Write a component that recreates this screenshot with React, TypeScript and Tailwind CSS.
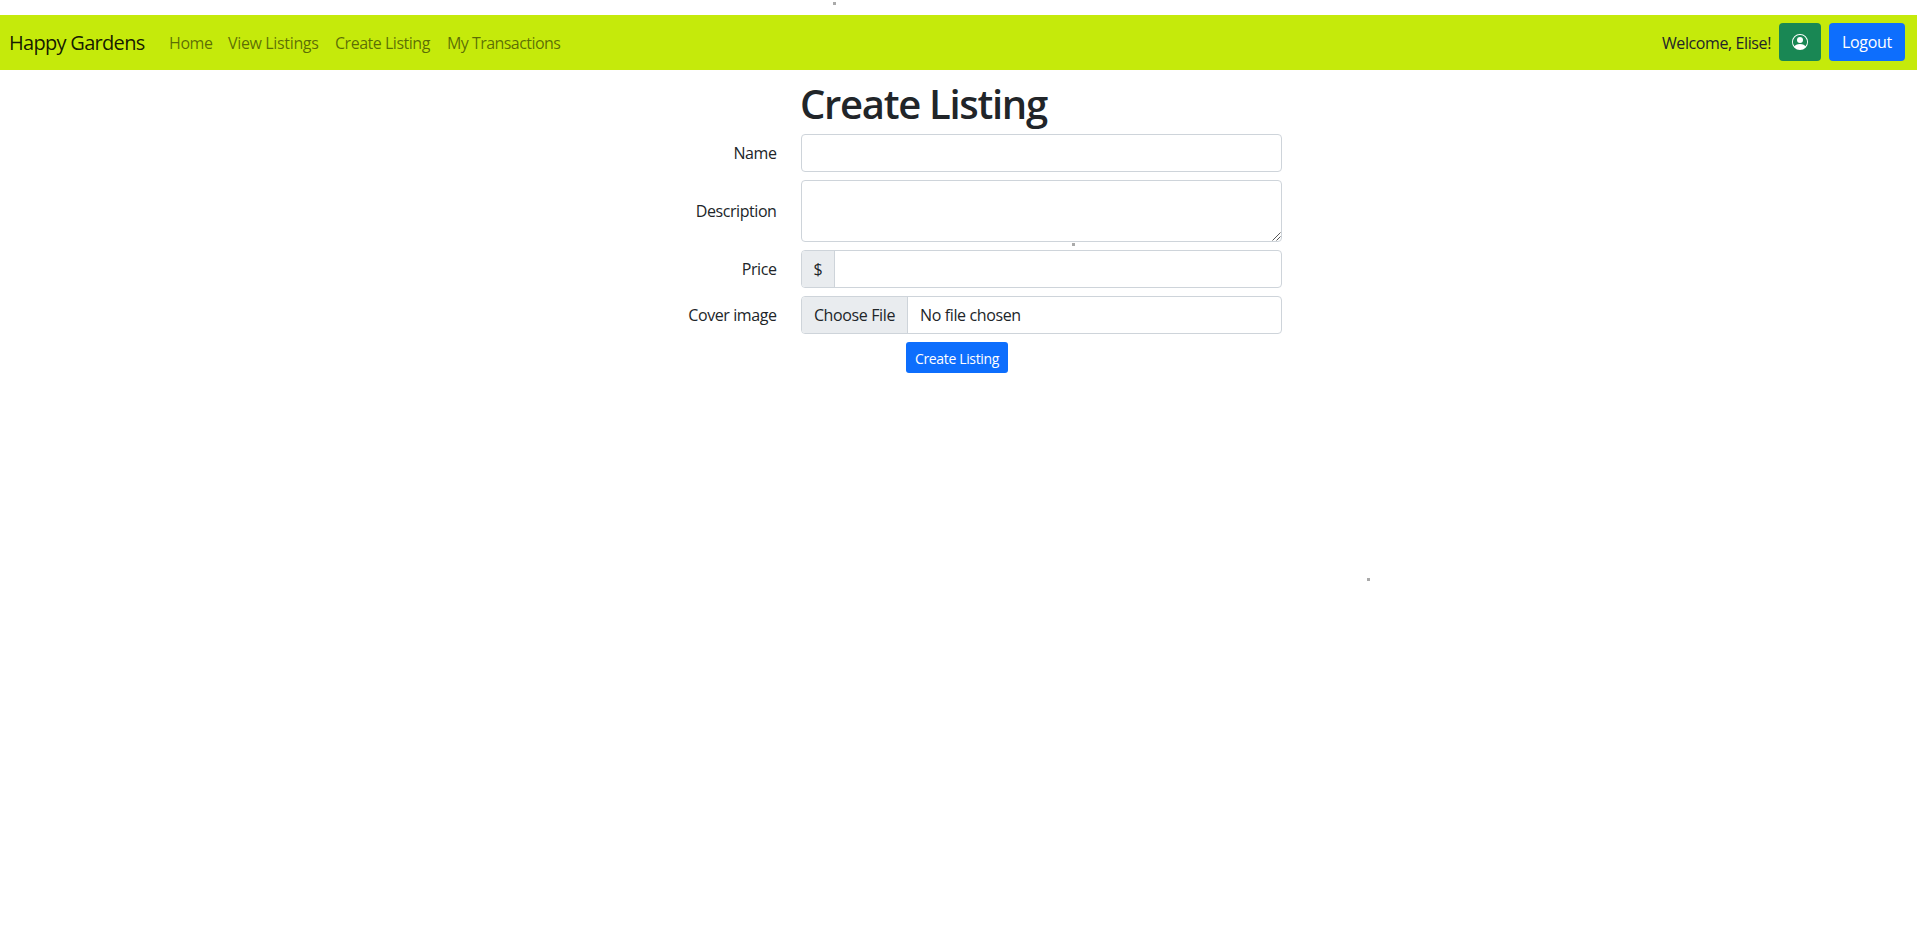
import type { ReactNode } from "react";
import { BsPersonCircle } from "react-icons/bs";

const field = "block w-full rounded-[4px] border border-[#ced4da] bg-white px-3 outline-none";

function FormRow({ label, children }: { label: string; children: ReactNode }) {
  return (
    <div className="mb-2 flex items-center">
      <label className="w-[776.5px] shrink-0 text-right tracking-[-0.42px]">{label}</label>
      <div className="ml-[24.5px] w-[481px]">{children}</div>
    </div>
  );
}

export default function App() {
  return (
    <div className="relative h-[934px] overflow-hidden bg-white pt-[15px] font-['Open_Sans','Noto_Sans',sans-serif] text-base leading-6 text-[#212529]">
      <nav className="flex h-[55px] items-center bg-[#c5ea0b] pr-3 pb-px pl-[9px]">
        <a className="w-[160px] shrink-0 pt-px text-[20px] leading-[30px] tracking-[-0.7px] whitespace-nowrap text-black/90">Happy Gardens</a>
        <div className="flex pt-[2px] whitespace-nowrap text-black/55">
          <a className="w-[59px] tracking-[-0.4px]">Home</a>
          <a className="w-[107px] tracking-[-0.35px]">View Listings</a>
          <a className="w-[112px] tracking-[-0.48px]">Create Listing</a>
          <a className="tracking-[-0.55px]">My Transactions</a>
        </div>
        <div className="ml-auto flex items-center gap-2">
          <span className="pt-[2px] tracking-[-0.4px]">Welcome, Elise!</span>
          <button className="flex h-[38px] w-[42px] items-center justify-center rounded-[4px] bg-[#198754] text-white">
            <BsPersonCircle size={16} />
          </button>
          <button className="h-[38px] w-[76px] rounded-[4px] bg-[#0d6efd] tracking-[-0.3px] text-white">Logout</button>
        </div>
      </nav>

      <main className="pt-2">
        <h1 className="mb-2 ml-[800px] h-[48px] pt-[2px] text-[40px] leading-[48px] font-semibold tracking-[-1.3px]">Create Listing</h1>
        <FormRow label="Name">
          <input className={`${field} h-[38px]`} />
        </FormRow>
        <FormRow label="Description">
          <div className="relative">
            <textarea className={`${field} h-[62px] resize-none py-1.5`} />
            <svg className="absolute right-[1px] bottom-[1px]" width="9" height="9" viewBox="0 0 9 9" stroke="#444" strokeWidth="0.9">
              <path d="M0.5 8.5 8.5 0.5M4.5 8.5 8.5 4.5" />
            </svg>
          </div>
        </FormRow>
        <FormRow label="Price">
          <div className="flex h-[38px] overflow-hidden rounded-[4px] border border-[#ced4da]">
            <span className="flex w-[33px] items-center justify-center border-r border-[#ced4da] bg-[#e9ecef]">$</span>
            <input className="min-w-0 flex-1 px-3 outline-none" />
          </div>
        </FormRow>
        <FormRow label="Cover image">
          <div className="flex h-[38px] items-center overflow-hidden rounded-[4px] border border-[#ced4da] whitespace-nowrap">
            <button className="h-full w-[106px] border-r border-[#ced4da] bg-[#e9ecef] tracking-[-0.37px]">Choose File</button>
            <span className="pl-3 tracking-[-0.37px]">No file chosen</span>
          </div>
        </FormRow>
        <button className="ml-[906px] block h-[31px] w-[102px] rounded-[3px] bg-[#0d6efd] pt-px text-[14px] leading-[21px] tracking-[-0.35px] whitespace-nowrap text-white">
          Create Listing
        </button>
      </main>

      <span className="absolute top-[2px] left-[833px] size-[3px] bg-[#aaa]" />
      <span className="absolute top-[243px] left-[1072px] size-[3px] bg-[#aaa]" />
      <span className="absolute top-[578px] left-[1367px] size-[3px] bg-[#aaa]" />
    </div>
  );
}
